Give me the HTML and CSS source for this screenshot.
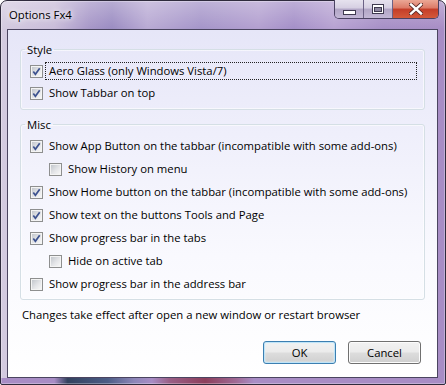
FILE: index.html
```html
<!DOCTYPE html>
<html lang="en">
<head>
    <meta charset="UTF-8">
    <title>Options Fx4</title>
    <link rel="stylesheet" href="styles.css">
</head>
<body>
<div class="window">
    <div class="titlebar">
        <span class="title">Options Fx4</span>
        <div class="caps">
            <span class="cap cap-min"><i class="min-glyph"></i></span>
            <span class="cap cap-max">
                <svg width="12" height="10" viewBox="0 0 12 10"><rect x="0.5" y="0.5" width="11" height="9" fill="#fff" stroke="#3f3a4f"/><rect x="2.5" y="3.5" width="7" height="4" fill="#8d86a0" stroke="#3f3a4f"/></svg>
            </span>
            <span class="cap cap-close">
                <svg width="14" height="12" viewBox="0 0 14 12"><path d="M2 1.5 L12 10.5 M12 1.5 L2 10.5" stroke="#5b2b27" stroke-width="4.2" stroke-linecap="square"/><path d="M2 1.5 L12 10.5 M12 1.5 L2 10.5" stroke="#fff" stroke-width="2.4" stroke-linecap="square"/></svg>
            </span>
        </div>
    </div>

    <div class="client">
        <fieldset class="group group-style">
            <legend>Style</legend>
            <label class="opt focus"><span class="cb on"></span><span class="text">Aero Glass (only Windows Vista/7)</span></label>
            <label class="opt"><span class="cb on"></span><span class="text">Show Tabbar on top</span></label>
        </fieldset>

        <fieldset class="group group-misc">
            <legend>Misc</legend>
            <label class="opt"><span class="cb on"></span><span class="text">Show App Button on the tabbar (incompatible with some add-ons)</span></label>
            <label class="opt sub"><span class="cb"></span><span class="text">Show History on menu</span></label>
            <label class="opt"><span class="cb on"></span><span class="text">Show Home button on the tabbar (incompatible with some add-ons)</span></label>
            <label class="opt"><span class="cb on"></span><span class="text">Show text on the buttons Tools and Page</span></label>
            <label class="opt"><span class="cb on"></span><span class="text">Show progress bar in the tabs</span></label>
            <label class="opt sub"><span class="cb"></span><span class="text">Hide on active tab</span></label>
            <label class="opt"><span class="cb"></span><span class="text">Show progress bar in the address bar</span></label>
        </fieldset>

        <p class="note">Changes take effect after open a new window or restart browser</p>

        <div class="buttons">
            <button class="btn btn-default">OK</button>
            <button class="btn">Cancel</button>
        </div>
    </div>
</div>
</body>
</html>
```

FILE: styles.css
```css
html, body {
    margin: 0;
    padding: 0;
}
body {
    width: 446px;
    height: 385px;
    overflow: hidden;
    background: #fff;
    font-family: "Open Sans", "Noto Sans", sans-serif;
    font-size: 11.3px;
    color: #000;
}
.window {
    box-sizing: border-box;
    width: 446px;
    height: 385px;
    display: flex;
    flex-direction: column;
    padding: 0 7px 6px 6px;
    border: 1px solid #2f2b3d;
    border-radius: 7px 7px 2px 2px;
    box-shadow: inset 0 0 0 1px rgba(255, 255, 255, .3);
    background:
        linear-gradient(90deg, #a88dc5 0, #a88dc5 12%, #33425f 15%, #4c5d86 24%, #8d86b8 30%, #a88dc5 34%, #9a5f86 38%, #8c3f5c 46%, #a06a95 53%, #a88dc5 57%, #a88dc5 100%) bottom / 100% 6px no-repeat,
        linear-gradient(180deg, rgba(255, 255, 255, .28) 0, rgba(255, 255, 255, 0) 28px),
        linear-gradient(90deg, #d4cbe0 0, #c9bcd9 12%, #a797c8 20%, #9b8cc2 25%, #b9aad4 33%, #a595c9 45%, #b3a0d0 58%, #a48fc8 66%, #b7a2d2 75%, #a68fc6 86%, #a88dc5 100%);
}
.titlebar {
    height: 28px;
    display: flex;
    justify-content: space-between;
    align-items: flex-start;
}
.title {
    margin: 6px 0 0 2px;
    line-height: 15px;
    text-shadow: 0 0 5px #fff, 0 0 8px rgba(255, 255, 255, .8);
}
.caps {
    display: flex;
    height: 18px;
    margin: -1px -1px 0 0;
    border: 1px solid #4b4262;
    border-top: 0;
    border-radius: 0 0 5px 5px;
    overflow: hidden;
}
.cap {
    display: flex;
    align-items: center;
    justify-content: center;
    width: 28px;
    background: linear-gradient(180deg, #e6e2ee 0, #d6cfe2 45%, #b1a5c5 50%, #c3b8d6 100%);
}
.cap + .cap {
    border-left: 1px solid #6c6286;
}
.cap-close {
    width: 45px;
    background: linear-gradient(180deg, #eba795 0, #dc7a66 45%, #c43d28 50%, #d4593a 100%);
}
.min-glyph {
    display: block;
    width: 11px;
    height: 3px;
    margin-top: 7px;
    background: #fff;
    border: 1px solid #3f3a4f;
}
.client {
    flex: 1;
    display: flex;
    flex-direction: column;
    padding: 12px 12px 13px 12px;
    border: 1px solid #4b4560;
    background: linear-gradient(180deg, #e6e6f8 0, #efeffb 30%, #f9f9fe 65%, #ffffff 100%);
}
.group {
    display: flex;
    flex-direction: column;
    gap: 4px;
    margin: 0;
    padding: 5px 7px 7px 9px;
    border: 1px solid #d5dfe5;
    border-radius: 3px;
    box-shadow: inset 0 0 0 1px rgba(255, 255, 255, .6);
}
.group legend {
    margin-left: -5px;
    padding: 0 2px;
    line-height: 15px;
}
.group-misc {
    margin-top: 7px;
    gap: 5px;
    padding-bottom: 6px;
}
.opt {
    display: flex;
    align-items: center;
    height: 18px;
}
.opt.sub {
    margin-left: 19px;
}
.cb {
    position: relative;
    flex: none;
    box-sizing: border-box;
    width: 13px;
    height: 13px;
    margin: 1px 2px 0 0;
    border: 1px solid #8e8f8f;
    background: #f4f4f4;
    padding: 1px;
}
.cb::before {
    content: "";
    display: block;
    width: 9px;
    height: 9px;
    background: linear-gradient(135deg, #c3c7cd 0, #e4e5e8 55%, #f6f6f6 100%);
}
.cb.on::after {
    content: "";
    position: absolute;
    left: 0;
    top: 0;
    width: 11px;
    height: 11px;
    background: url("data:image/svg+xml;utf8,<svg xmlns='http://www.w3.org/2000/svg' width='11' height='11' viewBox='0 0 11 11'><path d='M2.3 5.4 L4.4 8.2 L8.7 2.2' fill='none' stroke='%233d528f' stroke-width='1.7'/></svg>") no-repeat;
}
.opt .text {
    padding: 0 3px;
    line-height: 16px;
    border: 1px dotted transparent;
    white-space: nowrap;
}
.opt.focus .text {
    flex: 1;
    border-color: #222;
}
.note {
    margin: 7px 0 0 2px;
    line-height: 15px;
}
.buttons {
    display: flex;
    justify-content: flex-end;
    gap: 12px;
    margin: 19px 4px 0 0;
}
.btn {
    box-sizing: border-box;
    width: 73px;
    height: 23px;
    padding: 0;
    font: inherit;
    color: #000;
    border: 1px solid #707070;
    border-radius: 3px;
    background: linear-gradient(180deg, #f2f2f2 0, #ebebeb 48%, #dddddd 52%, #cfcfcf 100%);
    box-shadow: inset 0 0 0 1px #fcfcfc;
}
.btn-default {
    border-color: #3c7fb1;
    box-shadow: inset 0 0 0 1px #bfe4f8, inset 0 0 2px 1px #dff2fc;
}
```
